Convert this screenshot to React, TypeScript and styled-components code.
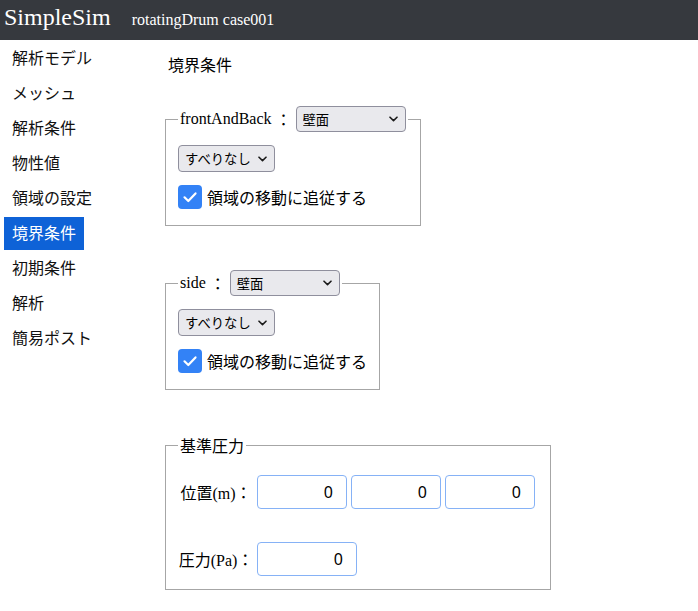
import React, { useState } from 'react';
import styled, { createGlobalStyle } from 'styled-components';

const menu = ['解析モデル', 'メッシュ', '解析条件', '物性値', '領域の設定', '境界条件', '初期条件', '解析', '簡易ポスト'];

const patches = [
  { name: 'frontAndBack', type: '壁面', slip: 'すべりなし', follow: true },
  { name: 'side', type: '壁面', slip: 'すべりなし', follow: true },
];

function Chevron() {
  return (
    <ArrowIcon width="9" height="6" viewBox="0 0 9 6">
      <path d="M1 1.2 L4.5 4.6 L8 1.2" fill="none" stroke="#1b1b1b" strokeWidth="1.6" strokeLinecap="round" strokeLinejoin="round" />
    </ArrowIcon>
  );
}

function Select({ value, options, width, height }: { value: string; options: string[]; width?: number; height: number }) {
  return (
    <SelectWrap>
      <SelectBox defaultValue={value} $w={width} $h={height}>
        {options.map((o) => (
          <option key={o}>{o}</option>
        ))}
      </SelectBox>
      <Chevron />
    </SelectWrap>
  );
}

function Follow({ checked }: { checked: boolean }) {
  return (
    <CheckRow>
      <CheckBox $on={checked}>
        {checked && (
          <svg width="16" height="16" viewBox="0 0 16 16">
            <path d="M2.5 8.3 L6.3 12 L13.5 4.4" fill="none" stroke="#fff" strokeWidth="2.2" strokeLinecap="round" strokeLinejoin="round" />
          </svg>
        )}
      </CheckBox>
      領域の移動に追従する
    </CheckRow>
  );
}

function App() {
  const [active, setActive] = useState('境界条件');

  return (
    <>
      <GlobalStyle />
      <Header>
        <Brand>SimpleSim</Brand>
        <CaseName>rotatingDrum case001</CaseName>
      </Header>
      <Body>
        <Sidebar>
          {menu.map((m) => (
            <NavItem key={m} $active={m === active} onClick={() => setActive(m)}>
              {m}
            </NavItem>
          ))}
        </Sidebar>
        <Main>
          <Title>境界条件</Title>
          <Stack>
            {patches.map((p) => (
              <Fieldset key={p.name}>
                <Legend>
                  <LegendRow>
                    <PatchName>{p.name}</PatchName>
                    <Colon>：</Colon>
                    <Select value={p.type} options={['壁面', '流入', '流出']} width={110} height={26} />
                  </LegendRow>
                </Legend>
                <Column>
                  <Select value={p.slip} options={['すべりなし', 'すべりあり']} height={27} />
                  <Follow checked={p.follow} />
                </Column>
              </Fieldset>
            ))}
            <Fieldset $pressure>
              <Legend>
                <LegendText>基準圧力</LegendText>
              </Legend>
              <PressureGrid>
                <Label>
                  位置<Latin>(m)</Latin>：
                </Label>
                <Inputs>
                  <NumberInput $w={90} defaultValue="0" />
                  <NumberInput $w={90} defaultValue="0" />
                  <NumberInput $w={90} defaultValue="0" />
                </Inputs>
                <Label>
                  圧力<Latin>(Pa)</Latin>：
                </Label>
                <Inputs>
                  <NumberInput $w={100} defaultValue="0" />
                </Inputs>
              </PressureGrid>
            </Fieldset>
          </Stack>
        </Main>
      </Body>
    </>
  );
}

const GlobalStyle = createGlobalStyle`
  body {
    margin: 0;
    background: #fff;
    color: #000;
    font-family: "Liberation Serif", "Noto Sans CJK JP", serif;
  }
`;

const Header = styled.header`
  height: 40px;
  box-sizing: border-box;
  padding: 4px 0 0 4px;
  background: #36393e;
  color: #fff;
  display: flex;
  align-items: baseline;
  gap: 21px;
`;

const Brand = styled.span`
  font-family: "Liberation Serif", serif;
  font-size: 24px;
`;

const CaseName = styled.span`
  font-family: "Liberation Serif", serif;
  font-size: 16px;
`;

const Body = styled.div`
  display: flex;
`;

const Sidebar = styled.nav`
  width: 160px;
  flex-shrink: 0;
  box-sizing: border-box;
  padding: 2px 0 0 4px;
  display: flex;
  flex-direction: column;
  align-items: flex-start;
  gap: 2px;
`;

const NavItem = styled.div<{ $active: boolean }>`
  height: 33px;
  box-sizing: border-box;
  display: flex;
  align-items: center;
  padding: 0 8px 3px;
  font-family: "Noto Sans CJK JP", sans-serif;
  font-size: 16px;
  cursor: pointer;
  background: ${(p) => (p.$active ? '#0e62d7' : 'transparent')};
  color: ${(p) => (p.$active ? '#fff' : '#111')};
`;

const Main = styled.main`
  flex: 1;
  padding: 13px 0 0 5px;
`;

const Title = styled.div`
  font-family: "Noto Sans CJK JP", sans-serif;
  font-size: 16px;
  line-height: 22px;
  margin: 0 0 31px 3px;
`;

const Stack = styled.div`
  display: flex;
  flex-direction: column;
  align-items: flex-start;
  gap: 44px;
`;

const Fieldset = styled.fieldset<{ $pressure?: boolean }>`
  margin: 0;
  min-width: 0;
  border: 1px solid #a6a6a6;
  padding: ${(p) => (p.$pressure ? '19px 15px 13px 12px' : '13px 12px 16px')};
`;

const Legend = styled.legend`
  padding: 0 2px;
`;

const LegendRow = styled.span`
  display: inline-flex;
  align-items: center;
  height: 26px;
`;

const LegendText = styled.span`
  display: block;
  font-family: "Noto Sans CJK JP", sans-serif;
  font-size: 16px;
  line-height: 22px;
`;

const PatchName = styled.span`
  font-family: "Liberation Serif", serif;
  font-size: 16px;
`;

const Colon = styled.span`
  font-family: "Noto Sans CJK JP", sans-serif;
  font-size: 16px;
  margin: 0 4px;
`;

const SelectWrap = styled.span`
  position: relative;
  display: inline-flex;
`;

const SelectBox = styled.select<{ $w?: number; $h: number }>`
  appearance: none;
  box-sizing: border-box;
  width: ${(p) => (p.$w ? `${p.$w}px` : 'auto')};
  height: ${(p) => p.$h}px;
  padding: 0 22px 0 6px;
  border: 1px solid #8f8f9d;
  border-radius: 4px;
  background: #e9e9ed;
  color: #000;
  font-family: "Noto Sans CJK JP", sans-serif;
  font-size: 13.33px;
`;

const ArrowIcon = styled.svg`
  position: absolute;
  right: 8px;
  top: 50%;
  margin-top: -3px;
  pointer-events: none;
`;

const Column = styled.div`
  display: flex;
  flex-direction: column;
  align-items: flex-start;
  gap: 13px;
`;

const CheckRow = styled.label`
  display: flex;
  align-items: center;
  gap: 5px;
  height: 24px;
  font-family: "Noto Sans CJK JP", sans-serif;
  font-size: 16px;
`;

const CheckBox = styled.span<{ $on: boolean }>`
  width: 24px;
  height: 24px;
  border-radius: 4px;
  box-sizing: border-box;
  display: flex;
  align-items: center;
  justify-content: center;
  background: ${(p) => (p.$on ? '#3382f6' : '#fff')};
  border: ${(p) => (p.$on ? 'none' : '1px solid #767676')};
`;

const PressureGrid = styled.div`
  display: grid;
  grid-template-columns: 76px auto;
  column-gap: 3px;
  row-gap: 33px;
  align-items: center;
`;

const Label = styled.div`
  text-align: center;
  white-space: nowrap;
  font-family: "Noto Sans CJK JP", sans-serif;
  font-size: 16px;
`;

const Latin = styled.span`
  font-family: "Liberation Serif", serif;
`;

const Inputs = styled.div`
  display: flex;
  gap: 4px;
`;

const NumberInput = styled.input<{ $w: number }>`
  width: ${(p) => p.$w}px;
  height: 34px;
  box-sizing: border-box;
  border: 1px solid #86b2f6;
  border-radius: 4px;
  padding: 0 13px;
  text-align: right;
  font-family: "Noto Sans", sans-serif;
  font-size: 16px;
  color: #000;
  outline: none;
`;

export default App;
